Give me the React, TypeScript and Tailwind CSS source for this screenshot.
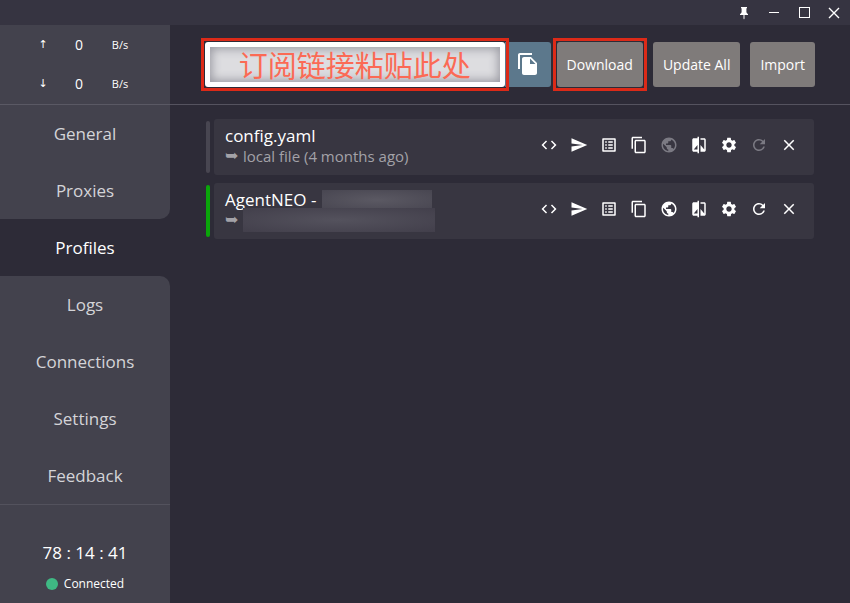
import React from "react";
import {
  MdClose,
  MdCode,
  MdCompare,
  MdContentCopy,
  MdFileCopy,
  MdOutlineListAlt,
  MdPublic,
  MdRefresh,
  MdSend,
  MdSettings,
} from "react-icons/md";

const navItems = ["General", "Proxies", "Profiles", "Logs", "Connections", "Settings", "Feedback"];
const active = "Profiles";

function PinIcon() {
  return (
    <svg viewBox="0 0 10 14" className="h-[14px] w-[10px]" fill="currentColor" aria-hidden="true">
      <path d="M2 1h6v1.3H7.4V6c.2 1 .9 1.600 1.600 2v1H5.500v3.500L5 13.500l-.5-1V9H1V8c.7-.4 1.400-1 1.600-2V2.300H2z" />
    </svg>
  );
}

function TitleBar() {
  return (
    <header className="flex h-[25px] shrink-0 items-center justify-end bg-[#363441] pr-px text-white">
      <button aria-label="Pin window" className="flex h-full w-[30px] items-center justify-center">
        <PinIcon />
      </button>
      <button aria-label="Minimize" className="flex h-full w-[30px] items-center justify-center">
        <span className="h-px w-[10px] bg-white" />
      </button>
      <button aria-label="Maximize" className="flex h-full w-[30px] items-center justify-center">
        <span className="size-[11px] border border-white" />
      </button>
      <button aria-label="Close" className="flex h-full w-[30px] items-center justify-center">
        <svg viewBox="0 0 12 12" className="size-3" stroke="currentColor" strokeWidth="1.400" aria-hidden="true">
          <path d="M1 1l10 10M11 1L1 11" />
        </svg>
      </button>
    </header>
  );
}

function TrafficRow({ arrow, value }: { arrow: string; value: string }) {
  return (
    <div className="grid flex-1 grid-cols-[38px_34px_48px] items-center pl-6 text-center">
      <span className="font-['DejaVu_Sans',sans-serif] text-[11px]">{arrow}</span>
      <span className="text-sm">{value}</span>
      <span className="text-[11px]">B/s</span>
    </div>
  );
}

function Sidebar() {
  return (
    <aside className="flex w-[170px] shrink-0 flex-col text-center">
      <div className="flex h-20 flex-col border-b border-[#5a5964] bg-[#43424d] text-white">
        <TrafficRow arrow="↑" value="0" />
        <TrafficRow arrow="↓" value="0" />
      </div>
      <nav className="flex flex-col">
        {navItems.map((name, i) => (
          <a
            key={name}
            href={"#" + name.toLowerCase()}
            className={
              "flex h-[57px] items-center justify-center text-[17px] " +
              (name === active
                ? "text-white"
                : "bg-[#43424d] text-[#d4d4d8] " +
                  (navItems[i + 1] === active ? "rounded-br-[10px]" : navItems[i - 1] === active ? "rounded-tr-[10px]" : ""))
            }
          >
            {name}
          </a>
        ))}
      </nav>
      <div className="flex flex-1 flex-col items-center gap-2 border-t border-[#53525d] bg-[#43424d] pt-9 text-white">
        <div className="text-[17px] leading-6">78 : 14 : 41</div>
        <div className="flex items-center gap-[6px] text-[12px] leading-[22px]">
          <span className="size-3 rounded-full bg-[#3fb984]" />
          Connected
        </div>
      </div>
    </aside>
  );
}

function Toolbar() {
  const button = "h-[45px] rounded-[3px] bg-[#7f7b7a] px-[10px] text-[14px] font-medium text-white whitespace-nowrap";
  const frame = "z-10 -m-1 border-3 border-[#dc2a18] p-px";
  return (
    <div className="flex h-20 items-center gap-[10px] border-b border-[#55535f] px-[35px] pb-px">
      <div className="flex min-w-0 flex-1 gap-[6px]">
        <div className="flex min-w-0 flex-1">
          <div className={frame + " flex min-w-0 flex-1"}>
            <input
              aria-label="Subscription link"
              defaultValue="订阅链接粘贴此处"
              className="h-[45px] w-full min-w-0 rounded-[3px] border-[5px] border-white bg-[#dddde0] text-center font-['Noto_Sans_CJK_SC',sans-serif] text-[29px] leading-9 text-[#fb6a55] shadow-[inset_0_0_10px_2px_#9b9ba3] outline-none"
            />
          </div>
          <button
            aria-label="Paste"
            className="flex h-[45px] w-[46px] shrink-0 items-center justify-center rounded-r-[3px] bg-[#5c788c] text-white"
          >
            <MdFileCopy className="size-6" />
          </button>
        </div>
        <div className={frame + " flex"}>
          <button className={button}>Download</button>
        </div>
      </div>
      <button className={button}>Update All</button>
      <button className={button}>Import</button>
    </div>
  );
}

function Actions({ local }: { local: boolean }) {
  const actions = [
    { name: "Edit code", icon: <MdCode />, dim: false },
    { name: "Send", icon: <MdSend />, dim: false },
    { name: "Rules", icon: <MdOutlineListAlt />, dim: false },
    { name: "Duplicate", icon: <MdContentCopy />, dim: false },
    { name: "Open website", icon: <MdPublic />, dim: local },
    { name: "Compare", icon: <MdCompare />, dim: false },
    { name: "Settings", icon: <MdSettings />, dim: false },
    { name: "Refresh", icon: <MdRefresh />, dim: local },
    { name: "Delete", icon: <MdClose />, dim: false },
  ];
  return (
    <div className="flex shrink-0 pb-1">
      {actions.map((a) => (
        <button
          key={a.name}
          aria-label={a.name}
          className={"flex h-8 w-[30px] items-center justify-center text-[18px] " + (a.dim ? "text-[#7b7a83]" : "text-white")}
        >
          {a.icon}
        </button>
      ))}
    </div>
  );
}

function Profile({ selected, local, title, detail }: { selected: boolean; local: boolean; title: React.ReactNode; detail: React.ReactNode }) {
  return (
    <li className="flex items-center gap-1">
      <span className={"h-[52px] w-1 rounded-[2px] " + (selected ? "bg-[#0aa50a]" : "bg-[#484651]")} />
      <div className="flex h-14 flex-1 items-center justify-between rounded-[3px] bg-[#383641] pr-[10px] pl-[11px]">
        <div className="pb-[2px]">
          <div className="flex h-5 items-center gap-[6px] text-[17px] text-white">{title}</div>
          <div className="flex h-5 items-center gap-1 text-[15px] text-[#a3a2a8]">
            <span className="w-[14px] font-['DejaVu_Sans',sans-serif] text-base">➥</span>
            {detail}
          </div>
        </div>
        <Actions local={local} />
      </div>
    </li>
  );
}

export default function App() {
  return (
    <div className="flex min-h-screen flex-col bg-[#2d2b37] font-['Open_Sans','Noto_Sans_CJK_SC',sans-serif]">
      <TitleBar />
      <div className="flex flex-1">
        <Sidebar />
        <main className="flex min-w-0 flex-1 flex-col">
          <Toolbar />
          <ul className="flex flex-col gap-2 py-[14px] pr-9 pl-9">
            <Profile selected={false} local title="config.yaml" detail="local file (4 months ago)" />
            <Profile
              selected
              local={false}
              title={
                <>
                  AgentNEO -
                  <span className="h-5 w-[110px] bg-radial from-[#5b5963] to-[#484651]" />
                </>
              }
              detail={<span className="h-6 w-48 bg-radial from-[#54525d] to-[#423f4b]" />}
            />
          </ul>
        </main>
      </div>
    </div>
  );
}
